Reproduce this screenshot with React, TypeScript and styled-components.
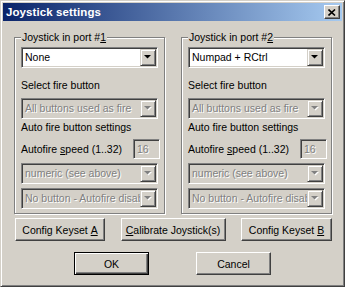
import React from "react";
import styled, { createGlobalStyle } from "styled-components";

const GlobalStyle = createGlobalStyle`
  html, body {
    margin: 0;
    padding: 0;
    background: #d4d0c8;
  }
  body {
    font-family: "Liberation Sans", Arial, sans-serif;
    font-size: 10.5px;
  }
`;

const Window = styled.div`
  width: 345px;
  height: 287px;
  box-sizing: border-box;
  background: #d4d0c8;
  border: 1px solid;
  border-color: #d4d0c8 #404040 #404040 #d4d0c8;
  box-shadow: inset 1px 1px 0 #fff, inset -1px -1px 0 #808080;
  padding: 2px;
  display: flex;
  flex-direction: column;
`;

const TitleBar = styled.div`
  height: 18px;
  display: flex;
  align-items: center;
  padding: 0 2px 0 3px;
  background: linear-gradient(to right, #0a246a, #a6caf0);
`;

const Title = styled.div`
  flex: 1;
  color: #fff;
  font-weight: bold;
  font-size: 11.5px;
  letter-spacing: 0.1px;
`;

const CloseButton = styled.div`
  width: 16px;
  height: 14px;
  box-sizing: border-box;
  background: #d4d0c8;
  border: 1px solid;
  border-color: #fff #404040 #404040 #fff;
  box-shadow: inset -1px -1px 0 #808080;
  display: flex;
  align-items: center;
  justify-content: center;
`;

const Body = styled.div`
  flex: 1;
  display: flex;
  flex-direction: column;
  padding: 16px 10px 0 11px;
`;

const Groups = styled.div`
  display: flex;
  justify-content: space-between;
`;

const Group = styled.div`
  position: relative;
  width: 151px;
  height: 177px;
  box-sizing: border-box;
  border: 1px solid #808080;
  box-shadow: inset 1px 1px 0 #fff, 1px 1px 0 #fff;
  padding: 9px 6px 0 6px;
  display: flex;
  flex-direction: column;
`;

const Legend = styled.div`
  position: absolute;
  top: -7px;
  left: 6px;
  padding: 0 1px;
  background: #d4d0c8;
  line-height: 13px;
  color: #000;
`;

const Label = styled.div<{ $top: number }>`
  margin-top: ${(p) => p.$top}px;
  height: 13px;
  line-height: 13px;
  color: #000;
  white-space: nowrap;
`;

const Combo = styled.div<{ $top: number; $disabled?: boolean }>`
  margin-top: ${(p) => p.$top}px;
  height: 21px;
  box-sizing: border-box;
  display: flex;
  border: 1px solid;
  border-color: #808080 #fff #fff #808080;
  box-shadow: inset 1px 1px 0 #404040, inset -1px -1px 0 #d4d0c8;
  padding: 1px;
  background: ${(p) => (p.$disabled ? "#d4d0c8" : "#fff")};
`;

const ComboText = styled.div<{ $disabled?: boolean }>`
  flex: 1;
  overflow: hidden;
  white-space: nowrap;
  padding-left: 2px;
  line-height: 17px;
  color: ${(p) => (p.$disabled ? "#808080" : "#000")};
  text-shadow: ${(p) => (p.$disabled ? "1px 1px 0 #fff" : "none")};
`;

const DropButton = styled.div`
  width: 16px;
  height: 17px;
  box-sizing: border-box;
  background: #d4d0c8;
  border: 1px solid;
  border-color: #d4d0c8 #404040 #404040 #d4d0c8;
  box-shadow: inset 1px 1px 0 #fff, inset -1px -1px 0 #808080;
  display: flex;
  align-items: center;
  justify-content: center;
`;

const SpeedRow = styled.div`
  margin-top: 5px;
  height: 20px;
  display: flex;
  align-items: center;
  justify-content: space-between;
`;

const Edit = styled.div`
  width: 27px;
  height: 20px;
  box-sizing: border-box;
  margin-right: -2px;
  border: 1px solid;
  border-color: #808080 #fff #fff #808080;
  box-shadow: inset 1px 1px 0 #404040, inset -1px -1px 0 #d4d0c8;
  padding: 0 3px;
  line-height: 18px;
  color: #808080;
  text-shadow: 1px 1px 0 #fff;
`;

const ButtonRow = styled.div`
  margin-top: 4px;
  display: flex;
  justify-content: space-between;
  padding: 0 0 0 1px;
`;

const Button = styled.div<{ $width: number; $default?: boolean }>`
  width: ${(p) => p.$width}px;
  height: 23px;
  box-sizing: border-box;
  display: flex;
  align-items: center;
  justify-content: center;
  color: #000;
  background: #d4d0c8;
  border: 1px solid;
  border-color: ${(p) => (p.$default ? "#000" : "#fff #404040 #404040 #fff")};
  box-shadow: ${(p) =>
    p.$default
      ? "inset 1px 1px 0 #fff, inset -1px -1px 0 #404040, inset -2px -2px 0 #808080"
      : "inset -1px -1px 0 #808080"};
  white-space: nowrap;
`;

const DialogButtons = styled.div`
  margin-top: 11px;
  display: flex;
  justify-content: center;
  gap: 47px;
  padding-right: 1px;
`;

const Arrow = ({ disabled }: { disabled?: boolean }) => (
  <svg width="8" height="5" viewBox="0 0 8 5">
    {disabled && <path d="M1 1h7L4.5 4.5Z" fill="#fff" />}
    <path d="M0 0h7L3.5 3.5Z" fill={disabled ? "#808080" : "#000"} />
  </svg>
);

const ComboBox = ({ top, value, disabled }: { top: number; value: string; disabled?: boolean }) => (
  <Combo $top={top} $disabled={disabled}>
    <ComboText $disabled={disabled}>{value}</ComboText>
    <DropButton>
      <Arrow disabled={disabled} />
    </DropButton>
  </Combo>
);

const PortGroup = ({ port, device }: { port: string; device: string }) => (
  <Group>
    <Legend>
      Joystick in port #<u>{port}</u>
    </Legend>
    <ComboBox top={0} value={device} />
    <Label $top={11}>Select fire button</Label>
    <ComboBox top={6} value="All buttons used as fire" disabled />
    <Label $top={2}>Auto fire button settings</Label>
    <SpeedRow>
      <span>
        Autofire <u>s</u>peed (1..32)
      </span>
      <Edit>16</Edit>
    </SpeedRow>
    <ComboBox top={4} value="numeric (see above)" disabled />
    <ComboBox top={4} value="No button - Autofire disabled" disabled />
  </Group>
);

export default function App() {
  return (
    <>
      <GlobalStyle />
      <Window>
        <TitleBar>
          <Title>Joystick settings</Title>
          <CloseButton>
            <svg width="8" height="7" viewBox="0 0 8 7">
              <path d="M0.5 0.5L7 6.5M7 0.5L0.5 6.5" stroke="#000" strokeWidth="1.6" />
            </svg>
          </CloseButton>
        </TitleBar>
        <Body>
          <Groups>
            <PortGroup port="1" device="None" />
            <PortGroup port="2" device="Numpad + RCtrl" />
          </Groups>
          <ButtonRow>
            <Button $width={90}>
              Config Keyset&nbsp;<u>A</u>
            </Button>
            <Button $width={105}>
              <u>C</u>alibrate Joystick(s)
            </Button>
            <Button $width={91}>
              Config Keyset&nbsp;<u>B</u>
            </Button>
          </ButtonRow>
          <DialogButtons>
            <Button $width={75} $default>
              OK
            </Button>
            <Button $width={75}>Cancel</Button>
          </DialogButtons>
        </Body>
      </Window>
    </>
  );
}
